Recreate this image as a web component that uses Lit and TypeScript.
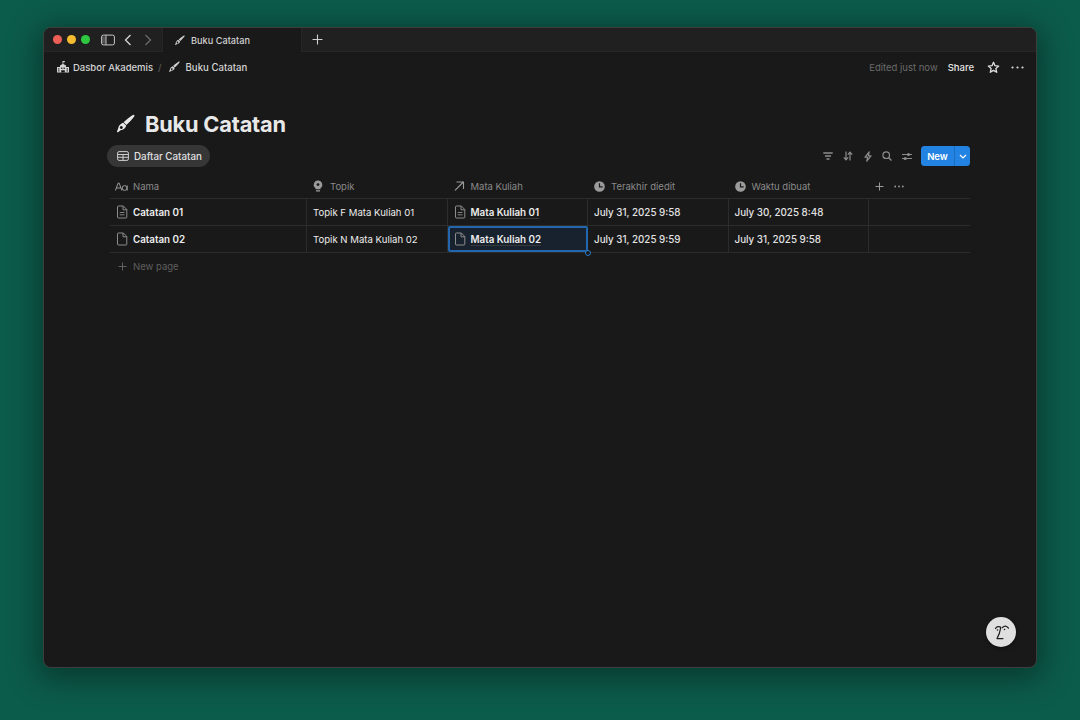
import { LitElement, html, css, svg } from "lit";
import { customElement } from "lit/decorators.js";

const brush = (s: number) => html`<svg width=${s} height=${s} viewBox="0 0 20 20"><path fill="currentColor" d="M19.200.9c.5.500.3 1.200-.2 1.800-1.800 2.400-5 6-7.600 8.200l-2.800-2.700C11 5.800 14.700 3.100 17.400 1.200c.7-.5 1.400-.7 1.800-.3z"/><path fill="currentColor" fill-rule="evenodd" d="M8.100 8.700l3 2.900c0 .9-.7 2.100-1.600 2.800-1.200 1.200-2.800 1.400-3.900 1.900-.9.4-1.500 1.300-2.600 1.900-.5.200-1.100-.2-1-.8.100-1 .7-1.700 1-2.500.5-1.300.5-2.800 1.700-3.900.8-.8 2.200-2.100 3.400-2.300zM6.300 12a1.500 1.500 0 1 0 .01 0z"/></svg>`;

const clock = html`<svg class="ic" width="11" height="11" viewBox="0 0 12 12"><circle cx="6" cy="6" r="5.800" fill="currentColor"/><path d="M6 2.500V6.500H9.500" fill="none" stroke="#191919" stroke-width="1.300"/></svg>`;

const doc = (lines: boolean) => html`<svg class="doc" width="12" height="14" viewBox="0 0 12 14"><path d="M1.500 1.700c0-.4.300-.7.700-.7H7.300L10.800 4.500V12.300c0 .4-.3.700-.7.700H2.200c-.4 0-.7-.3-.7-.7z M7 1V4.800H10.800" fill="none" stroke="currentColor" stroke-width="1"/>${lines ? svg`<path d="M3.700 7.500H8.500M3.700 9.800H8.500" stroke="currentColor" stroke-width=".9"/>` : ""}</svg>`;

const rows = [
  { n: "Catatan 01", lines: true, t: "Topik F Mata Kuliah 01", m: "Mata Kuliah 01", e: "July 31, 2025 9:58", c: "July 30, 2025 8:48" },
  { n: "Catatan 02", lines: false, t: "Topik N Mata Kuliah 02", m: "Mata Kuliah 02", e: "July 31, 2025 9:59", c: "July 31, 2025 9:58" },
];

@customElement("app-root")
export class AppRoot extends LitElement {
  static styles = css`
    :host { display: block; width: 1080px; height: 720px; box-sizing: border-box; padding: 27px 43px 52px; background: #0c5c4b; font-family: Inter, "Liberation Sans", sans-serif; overflow: hidden; }
    .win { height: 641px; box-sizing: border-box; background: #191919; border-radius: 8px; border: 1px solid #3d3f3e; box-shadow: 0 6px 30px 6px rgba(0,0,0,.36); display: flex; flex-direction: column; position: relative; overflow: hidden; }
    .tabs { height: 23px; flex: none; display: flex; align-items: center; background: #202020; border-bottom: 1px solid #262626; color: #d4d4d4; }
    .lights { display: flex; gap: 5px; margin-left: 9px; }
    .lights i { width: 9px; height: 9px; border-radius: 50%; display: block; }
    .side { margin-left: 11px; display: flex; color: #c8c8c8; }
    .nav { display: flex; margin-left: 9px; gap: 12px; align-items: center; }
    .tab { margin-left: 10px; width: 140px; align-self: stretch; height: 24px; box-sizing: border-box; background: #191919; display: flex; align-items: center; padding-left: 11px; gap: 6px; font-size: 9.200px; font-weight: 500; color: #cfcfcf; border-left: 1px solid #262626; border-right: 1px solid #262626; }
    .plus { margin-left: 10px; display: flex; color: #d0d0d0; }
    .crumbs { height: 30px; flex: none; display: flex; align-items: center; padding: 0 12px 0 13px; font-size: 9.500px; font-weight: 500; color: #d4d4d4; }
    .crumb { display: flex; align-items: center; gap: 5px; }
    .build { margin-right: -1px; }
    .sep { color: #555; margin: 0 6px 0 5px; }
    .crumb.last { gap: 6px; }
    .crumb.last span { font-size: 9.650px; }
    .spacer { flex: 1; }
    .edited { color: #6b6b6b; font-size: 9.500px; font-weight: 400; }
    .share { color: #e4e4e4; font-size: 9.500px; font-weight: 500; margin-left: 10px; }
    .star { display: flex; margin-left: 13px; color: #e0e0e0; }
    .more { display: flex; margin-left: 11px; color: #d8d8d8; }
    .page { flex: 1; padding: 24px 66px 0 66px; display: flex; flex-direction: column; }
    h1 { margin: 0; height: 36px; display: flex; align-items: center; gap: 10px; font-size: 21.800px; font-weight: 700; color: #e8e8e8; letter-spacing: -.2px; padding-left: 5px; }
    h1 svg { color: #e8e8e8; }
    .bar { height: 24px; display: flex; align-items: center; margin-top: 2px; }
    .chip { margin-left: -3px; height: 22px; width: 103px; box-sizing: border-box; border-radius: 11px; background: #363636; display: flex; align-items: center; gap: 5px; padding-left: 10px; font-size: 9.800px; font-weight: 500; color: #e0e0e0; }
    .tools { display: flex; align-items: center; gap: 9.750px; color: #8c8c8c; margin-right: 9px; }
    .tools svg { display: block; }
    .new { height: 20px; width: 49px; border-radius: 3.500px; background: #2383e2; color: #fff; font-size: 9.500px; font-weight: 600; display: flex; align-items: center; }
    .new span { flex: 1; text-align: center; }
    .new b { width: 16px; height: 100%; box-sizing: border-box; display: flex; align-items: center; justify-content: center; border-left: 1px solid #1a6fc0; }
    .table { margin-top: 6px; font-size: 9.600px; font-weight: 400; }
    .row { display: grid; grid-template-columns: 197px 140.500px 140.500px 140.500px 140.500px 101px; border-bottom: 1px solid #2c2c2c; height: 27px; box-sizing: border-box; }
    .row.head { height: 25px; font-size: 9.500px; font-weight: 400; }
    .cell { display: flex; align-items: center; padding-left: 6px; gap: 5px; color: #ececec; border-right: 1px solid #2c2c2c; position: relative; min-width: 0; }
    .cell:last-child { border-right: 0; }
    .date { font-size: 9.800px; font-weight: 500; color: #e3e3e3; }
    .head .cell { border-right: 0; color: #8a8a8a; gap: 6px; }
    .head .first { padding-left: 5px; gap: 5px; }
    .head .ic { color: #9b9b9b; flex: none; }
    .title { font-size: 9.800px; font-weight: 600; color: #ececec; }
    .rel { text-decoration: underline; text-decoration-color: #3a3a3a; text-decoration-thickness: 1px; text-underline-offset: 2px; }
    .doc { color: #8c8c8c; flex: none; }
    .sel { background: #18222e; outline: 2px solid #2267ae; outline-offset: -2px; border-radius: 2px; }
    .handle { position: absolute; right: -4px; bottom: -4px; width: 4px; height: 4px; border-radius: 50%; border: 1px solid #2a78c8; background: #191919; z-index: 1; }
    .newpage { height: 27px; display: flex; align-items: center; gap: 6px; padding-left: 8px; font-size: 9.500px; font-weight: 400; color: #5f5f5f; }
    .help { position: absolute; right: 20px; bottom: 20px; width: 30px; height: 30px; border-radius: 50%; background: #dfdfdf; display: flex; align-items: center; justify-content: center; box-shadow: 0 1px 4px rgba(0,0,0,.5); }
  `;

  render() {
    return html`<div class="win">
      <div class="tabs">
        <div class="lights"><i style="background:#ec5f57"></i><i style="background:#f3bd2f"></i><i style="background:#2dc840"></i></div>
        <div class="side"><svg width="14" height="12" viewBox="0 0 14 12"><rect x=".6" y="1.100" width="12.800" height="9.800" rx="1.800" fill="none" stroke="currentColor" stroke-width="1"/><path d="M5 1.300V10.700" stroke="currentColor"/><path d="M1 2.500H4.500V9.500H1z" fill="currentColor" opacity=".3"/></svg></div>
        <div class="nav">
          <svg width="8" height="12" viewBox="0 0 8 12"><path d="M6.500 1L1.500 6l5 5" fill="none" stroke="#d6d6d6" stroke-width="1.300"/></svg>
          <svg width="8" height="12" viewBox="0 0 8 12"><path d="M1.500 1l5 5-5 5" fill="none" stroke="#6a6a6a" stroke-width="1.300"/></svg>
        </div>
        <div class="tab">${brush(11)}<span>Buku Catatan</span></div>
        <div class="plus"><svg width="11" height="11" viewBox="0 0 11 11"><path d="M5.500 .5v10M.5 5.500h10" stroke="currentColor" stroke-width="1.100"/></svg></div>
      </div>
      <div class="crumbs">
        <div class="crumb"><svg class="build" width="12" height="12" viewBox="0 0 12 12" fill="#d4d4d4"><path d="M5.500 0h2.300v1.300H6.300V3L9 4.600V6h3v5.600H0V6h3V4.600L5.500 3z"/><path fill="#191919" d="M1.200 7.300h1.200v1.200H1.200zM1.200 9.300h1.200v1.200H1.200zM9.600 7.300h1.200v1.200H9.600zM9.600 9.300h1.200v1.200H9.600zM4.200 6.500h1.200v1.500H4.200zM6.600 6.500h1.200v1.500H6.600zM4.200 9.200h3.600v2.400H4.200z"/></svg><span>Dasbor Akademis</span></div>
        <span class="sep">/</span>
        <div class="crumb last">${brush(12)}<span>Buku Catatan</span></div>
        <div class="spacer"></div>
        <span class="edited">Edited just now</span>
        <span class="share">Share</span>
        <span class="star"><svg width="13" height="13" viewBox="0 0 13 13"><path d="M6.500 1.300l1.500 3.400 3.700.4-2.800 2.500.8 3.700-3.200-1.900-3.200 1.900.8-3.700L1.300 5.100l3.700-.4z" fill="none" stroke="currentColor" stroke-width="1.300" stroke-linejoin="round"/></svg></span>
        <span class="more"><svg width="13" height="3" viewBox="0 0 13 3" fill="currentColor"><circle cx="1.500" cy="1.500" r="1.100"/><circle cx="6.500" cy="1.500" r="1.100"/><circle cx="11.500" cy="1.500" r="1.100"/></svg></span>
      </div>
      <div class="page">
        <h1>${brush(20)}<span>Buku Catatan</span></h1>
        <div class="bar">
          <div class="chip"><svg width="12" height="10" viewBox="0 0 12 10"><rect x=".6" y=".6" width="10.800" height="8.800" rx="1.500" fill="none" stroke="#cfcfcf" stroke-width="1"/><path d="M.6 3.500H11.400M.6 6.300H11.400M6 3.500V9.400" stroke="#cfcfcf" stroke-width="1"/></svg><span>Daftar Catatan</span></div>
          <div class="spacer"></div>
          <div class="tools">
            <svg width="10" height="8" viewBox="0 0 10 8"><path d="M.3 1h9.400M2 4h6M3.500 7h3" stroke="currentColor" stroke-width="1.300"/></svg>
            <svg width="10" height="10" viewBox="0 0 10 10"><path d="M3 .5V8.500M.8 6.300L3 8.800l2.200-2.500M7 9.500V1.500M4.800 3.700L7 1.200l2.200 2.500" fill="none" stroke="currentColor" stroke-width="1.200"/></svg>
            <svg width="10" height="11" viewBox="0 0 10 11"><path d="M6.200.8L2 6.200h2.600L3.800 10.200 8 4.800H5.400z" fill="none" stroke="currentColor" stroke-width="1.200" stroke-linejoin="round"/></svg>
            <svg width="10" height="10" viewBox="0 0 10 10"><circle cx="4.200" cy="4.200" r="3.300" fill="none" stroke="currentColor" stroke-width="1.200"/><path d="M6.700 6.700L9.500 9.500" stroke="currentColor" stroke-width="1.300"/></svg>
            <svg width="10" height="9" viewBox="0 0 10 9"><path d="M0 2.500h10M0 6.500h10" stroke="currentColor" stroke-width="1.100"/><circle cx="6.500" cy="2.500" r="1.600" fill="currentColor"/><circle cx="3.200" cy="6.500" r="1.600" fill="currentColor"/></svg>
          </div>
          <div class="new"><span>New</span><b><svg width="8" height="5" viewBox="0 0 8 5"><path d="M1 1l3 3 3-3" fill="none" stroke="#fff" stroke-width="1.200"/></svg></b></div>
        </div>
        <div class="table">
          <div class="row head">
            <div class="cell first"><svg class="ic" width="13" height="9" viewBox="0 0 13 9"><path d="M.4 8.500L3.200 1h.9l2.800 7.500M1.400 6h4.500" fill="none" stroke="currentColor" stroke-width="1"/><ellipse cx="9.600" cy="6" rx="2.400" ry="2.400" fill="none" stroke="currentColor"/><path d="M12.200 3.500V8.500" stroke="currentColor"/></svg><span>Nama</span></div>
            <div class="cell"><svg class="ic" width="10" height="12" viewBox="0 0 10 12" style="margin-right:1px"><path d="M5 .5a4.200 4.200 0 0 1 2.500 7.600V9.300h-5V8.100A4.200 4.200 0 0 1 5 .5z" fill="currentColor"/><circle cx="5" cy="4.600" r="1.400" fill="#191919"/><path d="M3 10.800H7" stroke="currentColor" stroke-width="1.200"/></svg><span>Topik</span></div>
            <div class="cell"><svg class="ic" width="11" height="10" viewBox="0 0 11 10"><path d="M1 9.300L9.300 1M2.500 1h7v7" fill="none" stroke="currentColor" stroke-width="1.100"/></svg><span>Mata Kuliah</span></div>
            <div class="cell">${clock}<span>Terakhir diedit</span></div>
            <div class="cell">${clock}<span>Waktu dibuat</span></div>
            <div class="cell" style="gap:10px">
              <svg class="ic" width="9" height="9" viewBox="0 0 9 9"><path d="M4.500 .5v8M.5 4.500h8" stroke="currentColor" stroke-width="1"/></svg>
              <svg class="ic" width="10" height="3" viewBox="0 0 10 3" fill="currentColor"><circle cx="1.200" cy="1.500" r=".9"/><circle cx="5" cy="1.500" r=".9"/><circle cx="8.800" cy="1.500" r=".9"/></svg>
            </div>
          </div>
          ${rows.map((r, i) => html`<div class="row">
            <div class="cell">${doc(r.lines)}<span class="title">${r.n}</span></div>
            <div class="cell">${r.t}</div>
            <div class="cell ${i === 1 ? "sel" : ""}">${doc(r.lines)}<span class="title rel">${r.m}</span>${i === 1 ? html`<i class="handle"></i>` : ""}</div>
            <div class="cell date">${r.e}</div>
            <div class="cell date">${r.c}</div>
            <div class="cell"></div>
          </div>`)}
          <div class="newpage"><svg width="9" height="9" viewBox="0 0 9 9"><path d="M4.500 .5v8M.5 4.500h8" stroke="#5f5f5f" stroke-width="1"/></svg><span>New page</span></div>
        </div>
      </div>
      <div class="help"><svg width="16" height="17" viewBox="-1.500 0 16 17"><path d="M1 4.500C2 2.500 4.500 2 6.300 3.300 5.700 7 4.500 11 2.500 14.600H8.500" fill="none" stroke="#1e1e1e" stroke-width="1.200" stroke-linecap="round" stroke-linejoin="round"/><path d="M8 3.500C10 1.600 12 1.600 14 4.200" fill="none" stroke="#1e1e1e" stroke-width="1.200" stroke-linecap="round"/><circle cx="3" cy="6" r=".8" fill="#1e1e1e"/><circle cx="10" cy="5.500" r=".8" fill="#1e1e1e"/></svg></div>
    </div>`;
  }
}
